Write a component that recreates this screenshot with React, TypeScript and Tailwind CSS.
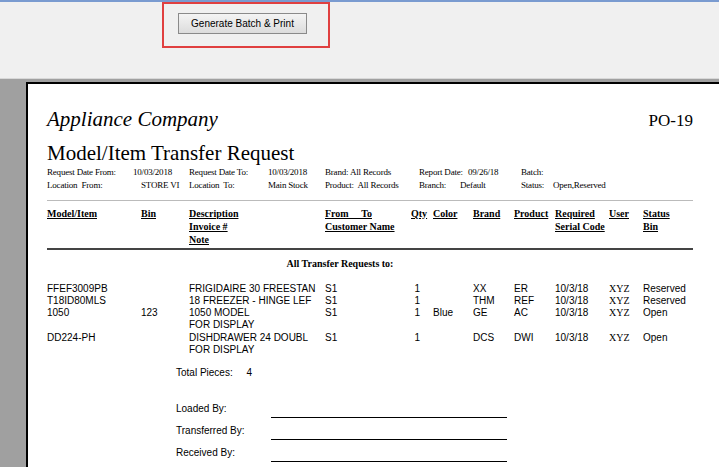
const cols = "grid grid-cols-[94px_48px_136px_86px_22px_40px_41px_41px_54px_34px_1fr]";

const rows = [
  ["FFEF3009PB", "", "FRIGIDAIRE 30 FREESTAN", "S1", "1", "", "XX", "ER", "10/3/18", "XYZ", "Reserved", ""],
  ["T18ID80MLS", "", "18 FREEZER - HINGE LEF", "S1", "1", "", "THM", "REF", "10/3/18", "XYZ", "Reserved", ""],
  ["1050", "123", "1050 MODEL", "S1", "1", "Blue", "GE", "AC", "10/3/18", "XYZ", "Open", "FOR DISPLAY"],
  ["DD224-PH", "", "DISHDRAWER 24 DOUBL", "S1", "1", "", "DCS", "DWI", "10/3/18", "XYZ", "Open", "FOR DISPLAY"],
];

const meta = "grid grid-cols-[86px_56px_79px_57px_25px_69px_41px_61px_32px_1fr] whitespace-nowrap";

export default function App() {
  const serif = { fontFamily: '"Liberation Serif", serif' };
  const sans = { fontFamily: '"Liberation Sans", Arial, sans-serif' };
  return (
    <div className="w-[719px] h-[467px] overflow-hidden bg-[#f0f0f0] flex flex-col" style={sans}>
      <div className="h-[2px] shrink-0 bg-[#7a9bd0]" />
      <div className="h-[76px] shrink-0 relative">
        <div className="absolute left-[162px] top-0 w-[168px] h-[46px] border-2 border-[#e04040]" />
        <button className="absolute left-[178px] top-[11px] w-[129px] h-[21px] bg-gradient-to-b from-[#f4f4f4] to-[#dcdcdc] border border-[#8a8a8a] text-[10px] text-black">
          Generate Batch &amp; Print
        </button>
      </div>
      <div className="flex-1 min-h-0 bg-[#a0a0a0] pl-[26px] pt-[3px] border-t border-[#d8d8d8]">
        <div className="h-full bg-white border-l-2 border-t-2 border-black pl-[19px] pr-[26px] pt-[20px] text-black">
          <div className="flex justify-between items-baseline" style={serif}>
            <span className="italic text-[21px]">Appliance Company</span>
            <span className="text-[17px]">PO-19</span>
          </div>
          <div className="text-[21px] mt-[5px] leading-[24px]" style={serif}>Model/Item Transfer Request</div>
          <div className="text-[9px] tracking-[-0.2px] leading-[13px] mt-[1px]" style={serif}>
            <div className={meta}>
              <span>Request Date From:</span><span>10/03/2018</span><span>Request Date To:</span><span>10/03/2018</span>
              <span>Brand:</span><span>All Records</span><span>Report Date:</span><span className="pl-[8px]">09/26/18</span><span>Batch:</span><span></span>
            </div>
            <div className={meta}>
              <span>Location&nbsp; From:</span><span className="pl-[8px]">STORE VI</span><span>Location&nbsp; To:</span><span>Main Stock</span>
              <span className="col-span-2">Product:&nbsp; All Records</span><span>Branch:</span><span>Default</span><span>Status:</span><span>Open,Reserved</span>
            </div>
          </div>
          <div className="h-px bg-[#bbb] mt-[8px]" />
          <div className={`${cols} text-[10px] leading-[13px] font-bold underline mt-[6px]`} style={serif}>
            <span>Model/Item</span><span>Bin</span>
            <span className="flex flex-col"><span>Description</span><span>Invoice #</span><span>Note</span></span>
            <span className="flex flex-col"><span>From&nbsp;&nbsp;&nbsp;&nbsp;&nbsp;To</span><span>Customer Name</span></span>
            <span>Qty</span><span>Color</span><span>Brand</span><span>Product</span>
            <span className="flex flex-col"><span>Required</span><span>Serial Code</span></span>
            <span>User</span>
            <span className="flex flex-col"><span>Status</span><span>Bin</span></span>
          </div>
          <div className="h-[2px] bg-[#444] mt-[2px]" />
          <div className="text-center text-[10px] font-bold mt-[6px] pr-[60px]" style={serif}>All Transfer Requests to:</div>
          <div className="mt-[12px] text-[10px] leading-[12.3px]">
            {rows.map((r) => (
              <div key={r[0]} className={cols}>
                <span>{r[0]}</span><span>{r[1]}</span>
                <span className="flex flex-col"><span>{r[2]}</span>{r[11] && <span>{r[11]}</span>}</span>
                <span>{r[3]}</span><span className="text-right pr-[13px] -ml-[22px]">{r[4]}</span>
                <span>{r[5]}</span><span>{r[6]}</span><span>{r[7]}</span><span>{r[8]}</span>
                <span style={serif}>{r[9]}</span><span>{r[10]}</span>
              </div>
            ))}
          </div>
          <div className="text-[10px] ml-[129px] mt-[9px]">Total Pieces:&nbsp;&nbsp;&nbsp;&nbsp; 4</div>
          <div className="ml-[129px] mt-[22px] flex flex-col gap-[6px] text-[10px] leading-[13px]">
            {["Loaded By:", "Transferred By:", "Received By:"].map((l) => (
              <div key={l} className="flex items-start">
                <span className="w-[95px]">{l}</span>
                <span className="w-[236px] h-[16px] border-b border-black" />
              </div>
            ))}
          </div>
        </div>
      </div>
    </div>
  );
}
